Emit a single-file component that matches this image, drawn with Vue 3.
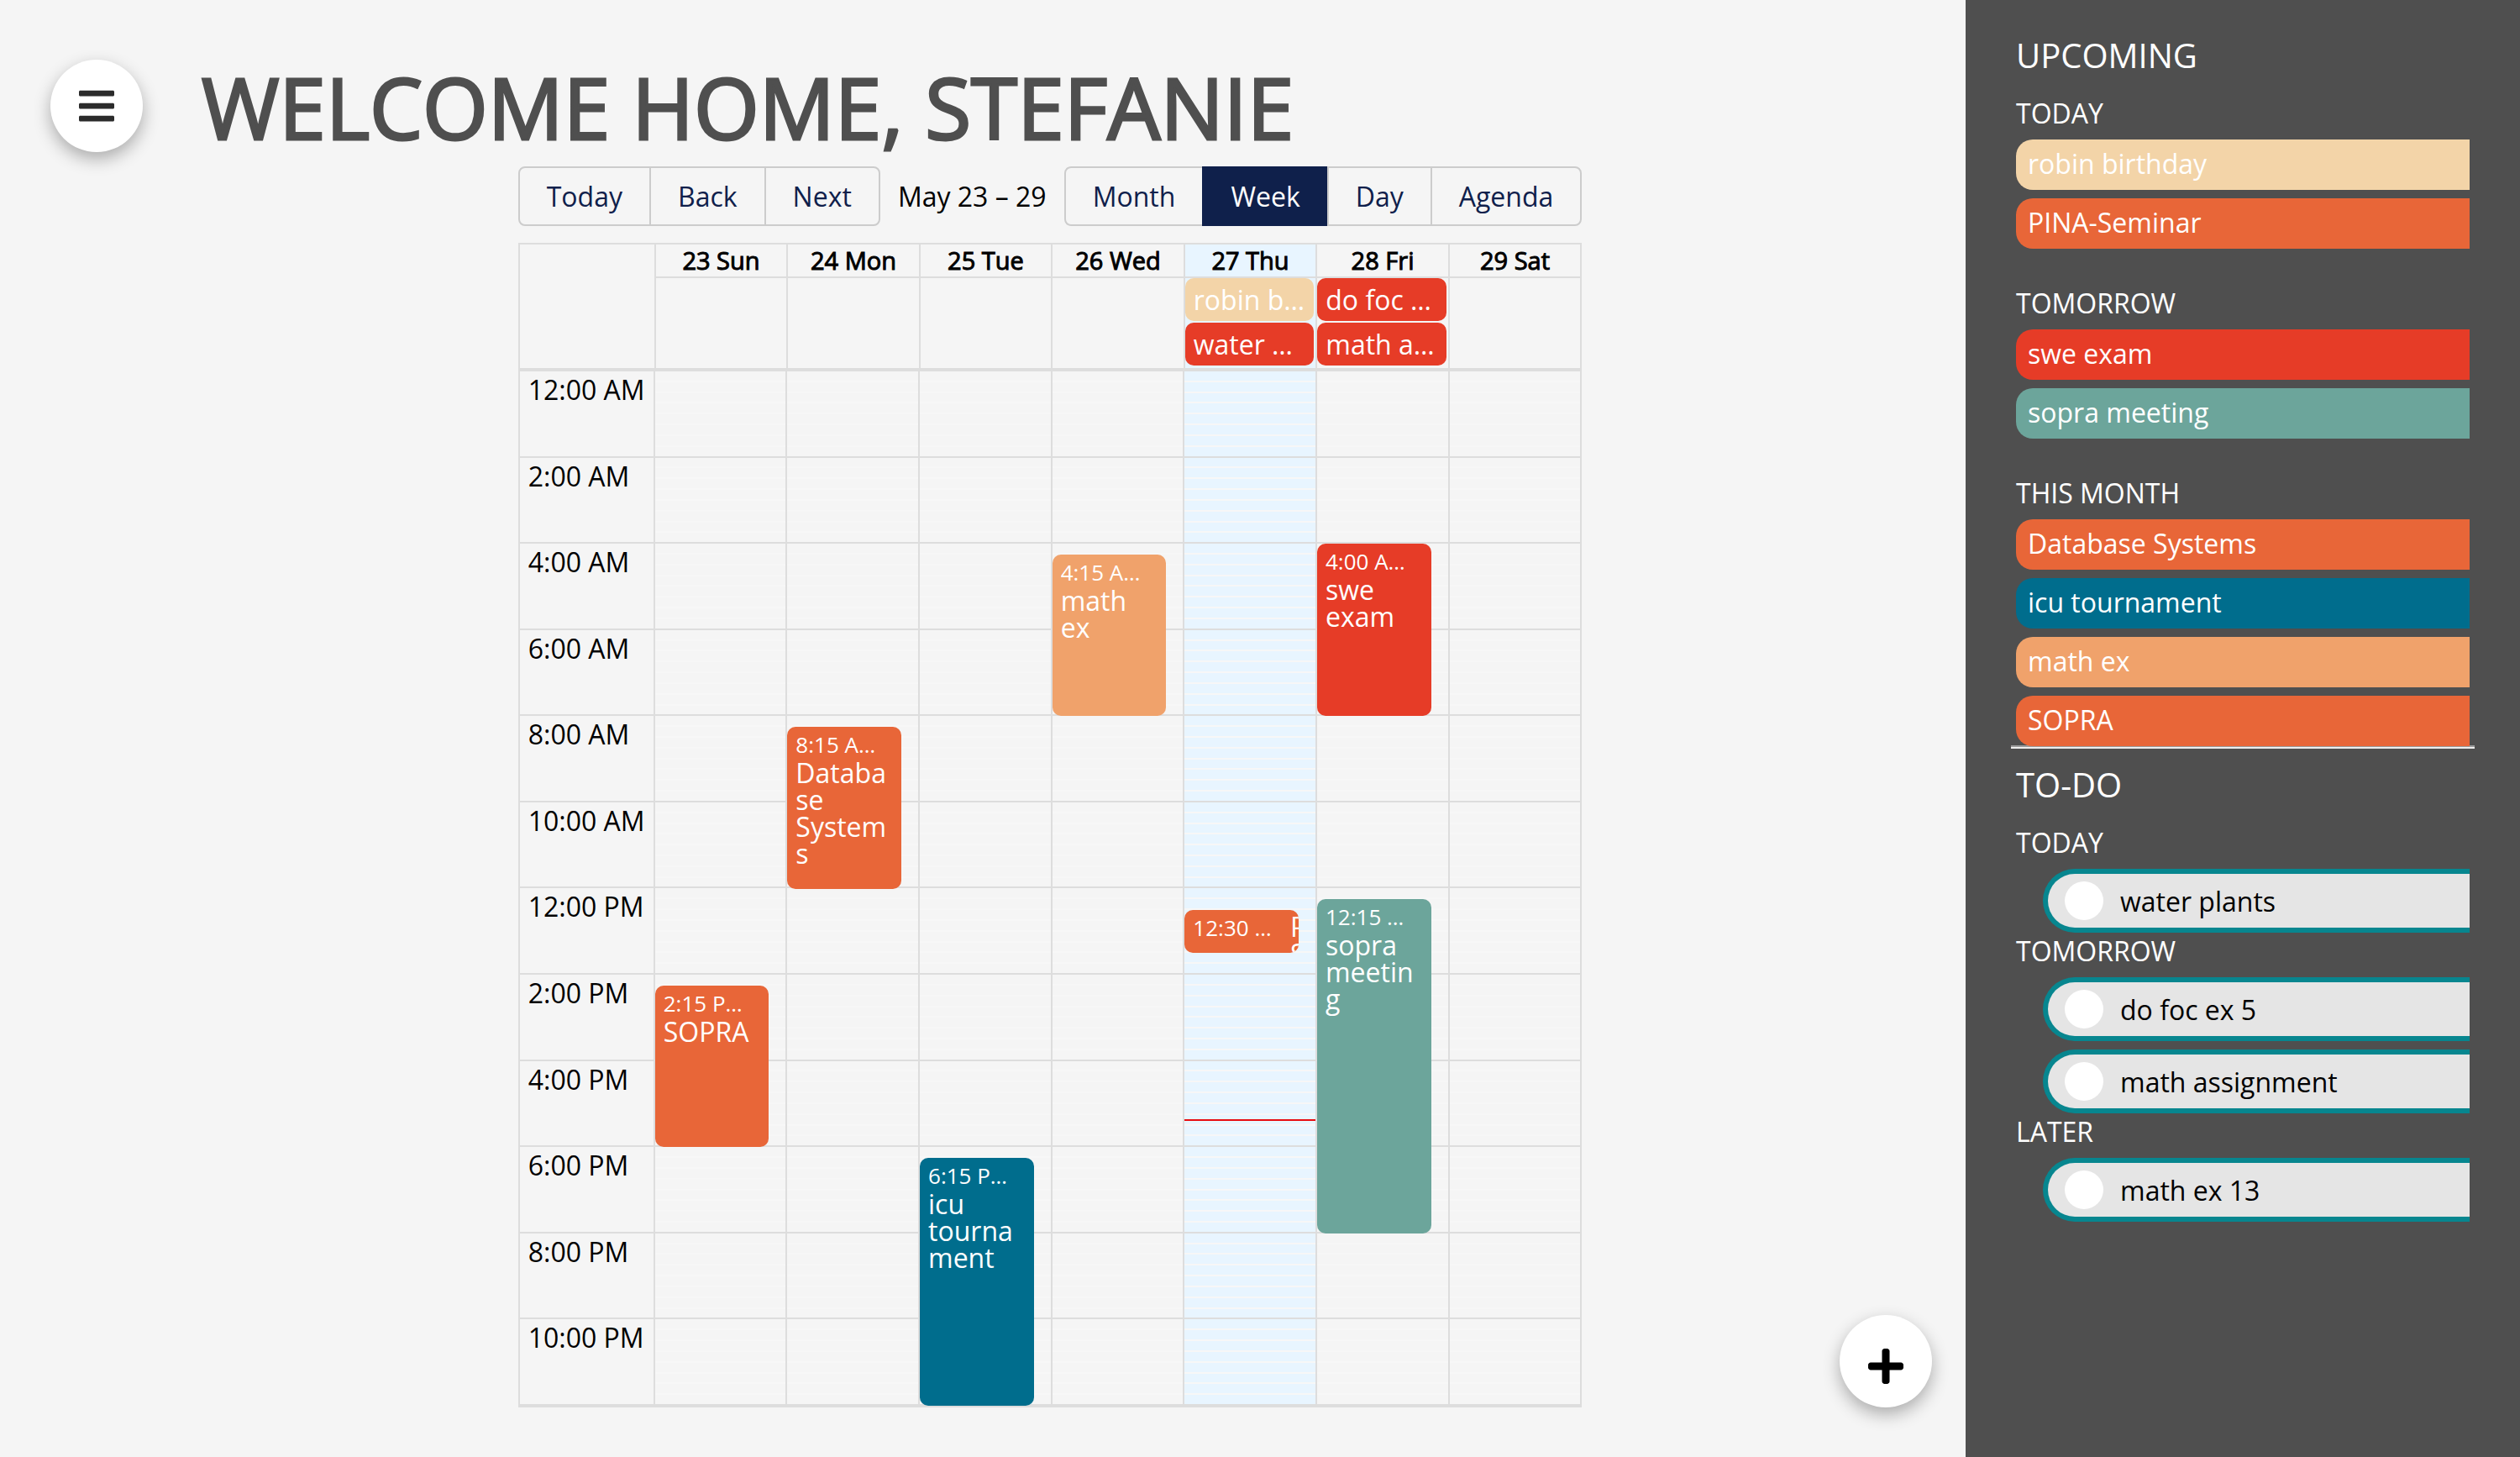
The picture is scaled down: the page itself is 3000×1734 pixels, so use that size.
<script setup>
import { ref } from 'vue'

const views = ['Month', 'Week', 'Day', 'Agenda']
const view = ref('Week')

const hours = [
  '12:00 AM', '2:00 AM', '4:00 AM', '6:00 AM', '8:00 AM', '10:00 AM',
  '12:00 PM', '2:00 PM', '4:00 PM', '6:00 PM', '8:00 PM', '10:00 PM',
]

// Event times are hours since midnight.
const days = [
  { name: '23 Sun', allDay: [], events: [{ title: 'SOPRA', label: '2:15 PM – 6:00 PM', from: 14.25, to: 18, tone: 'orange' }] },
  { name: '24 Mon', allDay: [], events: [{ title: 'Database Systems', label: '8:15 AM – 12:00 PM', from: 8.25, to: 12, tone: 'orange' }] },
  { name: '25 Tue', allDay: [], events: [{ title: 'icu tournament', label: '6:15 PM – 11:59 PM', from: 18.25, to: 24, tone: 'blue' }] },
  { name: '26 Wed', allDay: [], events: [{ title: 'math ex', label: '4:15 AM – 8:00 AM', from: 4.25, to: 8, tone: 'peach' }] },
  {
    name: '27 Thu',
    today: true,
    now: 17.35,
    allDay: [{ title: 'robin birthday', tone: 'sand' }, { title: 'water plants', tone: 'red' }],
    events: [{ title: 'PINA-Seminar', label: '12:30 PM – 1:30 PM', from: 12.5, to: 13.5, tone: 'orange' }],
  },
  {
    name: '28 Fri',
    allDay: [{ title: 'do foc ex 5', tone: 'red' }, { title: 'math assignment', tone: 'red' }],
    events: [
      { title: 'swe exam', label: '4:00 AM – 8:00 AM', from: 4, to: 8, tone: 'red' },
      { title: 'sopra meeting', label: '12:15 PM – 8:00 PM', from: 12.25, to: 20, tone: 'green' },
    ],
  },
  { name: '29 Sat', allDay: [], events: [] },
]

const upcoming = [
  { name: 'TODAY', items: [{ title: 'robin birthday', tone: 'sand' }, { title: 'PINA-Seminar', tone: 'orange' }] },
  { name: 'TOMORROW', items: [{ title: 'swe exam', tone: 'red' }, { title: 'sopra meeting', tone: 'green' }] },
  {
    name: 'THIS MONTH',
    items: [
      { title: 'Database Systems', tone: 'orange' },
      { title: 'icu tournament', tone: 'blue' },
      { title: 'math ex', tone: 'peach' },
      { title: 'SOPRA', tone: 'orange' },
    ],
  },
]

const todos = [
  { name: 'TODAY', items: ['water plants'] },
  { name: 'TOMORROW', items: ['do foc ex 5', 'math assignment'] },
  { name: 'LATER', items: ['math ex 13'] },
]

const percent = (h) => `${(h / 24) * 100}%`
const span = (e) => ({ top: percent(e.from), height: percent(e.to - e.from) })
</script>

<template>
  <div class="page">
    <main class="main">
      <header class="top">
        <button class="round" type="button" aria-label="Menu">
          <svg class="icon" viewBox="0 0 448 512" aria-hidden="true">
            <path fill="#2b2b2b" d="M16 132h416c8.837 0 16-7.163 16-16V76c0-8.837-7.163-16-16-16H16C7.163 60 0 67.163 0 76v40c0 8.837 7.163 16 16 16zm0 160h416c8.837 0 16-7.163 16-16v-40c0-8.837-7.163-16-16-16H16c-8.837 0-16 7.163-16 16v40c0 8.837 7.163 16 16 16zm0 160h416c8.837 0 16-7.163 16-16v-40c0-8.837-7.163-16-16-16H16c-8.837 0-16 7.163-16 16v40c0 8.837 7.163 16 16 16z" />
          </svg>
        </button>
        <h1 class="title">WELCOME HOME, STEFANIE</h1>
      </header>

      <section class="calendar">
        <div class="toolbar">
          <div class="group">
            <button type="button">Today</button>
            <button type="button">Back</button>
            <button type="button">Next</button>
          </div>
          <span class="range">May 23 – 29</span>
          <div class="group">
            <button v-for="v in views" :key="v" type="button" :class="{ active: v === view }" @click="view = v">{{ v }}</button>
          </div>
        </div>

        <div class="week">
          <div class="week-head">
            <div class="gutter"></div>
            <div v-for="d in days" :key="d.name" class="head-col" :class="{ today: d.today }">
              <div class="day-name">{{ d.name }}</div>
              <div class="all-day">
                <div v-for="e in d.allDay" :key="e.title" class="chip" :class="e.tone">{{ e.title }}</div>
              </div>
            </div>
          </div>
          <div class="week-body">
            <div class="gutter">
              <div v-for="h in hours" :key="h" class="slot-group hour">{{ h }}</div>
            </div>
            <div v-for="d in days" :key="d.name" class="day-col" :class="{ today: d.today }">
              <div v-for="h in hours" :key="h" class="slot-group">
                <div v-for="n in 8" :key="n" class="slot"></div>
              </div>
              <div class="events">
                <div v-for="e in d.events" :key="e.title" class="event" :class="e.tone" :style="span(e)">
                  <div class="event-label">{{ e.label }}</div>
                  <div class="event-title">{{ e.title }}</div>
                </div>
              </div>
              <div v-if="d.now" class="now" :style="{ top: percent(d.now) }"></div>
            </div>
          </div>
        </div>
      </section>

      <button class="round add" type="button" aria-label="Add">
        <svg class="icon" viewBox="0 0 448 512" aria-hidden="true">
          <path d="M416 208H272V64c0-17.670-14.330-32-32-32h-32c-17.670 0-32 14.330-32 32v144H32c-17.670 0-32 14.330-32 32v32c0 17.670 14.330 32 32 32h144v144c0 17.670 14.330 32 32 32h32c17.670 0 32-14.330 32-32V304h144c17.670 0 32-14.330 32-32v-32c0-17.670-14.330-32-32-32z" />
        </svg>
      </button>
    </main>

    <aside class="side">
      <section class="upcoming">
        <h2>UPCOMING</h2>
        <div v-for="g in upcoming" :key="g.name" class="bars">
          <h3>{{ g.name }}</h3>
          <ul>
            <li v-for="i in g.items" :key="i.title" class="bar" :class="i.tone">{{ i.title }}</li>
          </ul>
        </div>
      </section>
      <hr>
      <section>
        <h2>TO-DO</h2>
        <div v-for="g in todos" :key="g.name" class="todos">
          <h3>{{ g.name }}</h3>
          <ul>
            <li v-for="t in g.items" :key="t">
              <label class="todo"><input type="checkbox">{{ t }}</label>
            </li>
          </ul>
        </div>
      </section>
    </aside>
  </div>
</template>

<style>
body {
  background: #f5f5f5;
}
</style>

<style scoped>
.page {
  display: flex;
  min-height: 100vh;
  font-family: "Open Sans", "Noto Sans", sans-serif;
  font-size: 32px;
  line-height: 43px;
  color: #000;
}

.page *,
.page {
  box-sizing: border-box;
}

button {
  font: inherit;
  cursor: pointer;
}

h1,
h2,
h3,
ul {
  margin: 0;
  padding: 0;
  list-style: none;
  font-weight: 400;
}

.sand { background: #f3d4a8; }
.orange { background: #e86638; }
.red { background: #e63c27; }
.green { background: #6ca59b; }
.blue { background: #006d8d; }
.peach { background: #f0a26b; }

.main {
  position: relative;
  flex: 1;
  min-width: 0;
  display: flex;
  flex-direction: column;
  padding: 56px 0 59px;
}

.top {
  display: flex;
  gap: 70px;
  padding-left: 60px;
}

.top .round {
  margin-top: 15px;
}

.round {
  display: flex;
  align-items: center;
  justify-content: center;
  width: 110px;
  height: 110px;
  padding: 0;
  border: 0;
  border-radius: 50%;
  background: #fff;
  box-shadow: 0 8px 20px rgba(0, 0, 0, 0.3);
}

.add {
  position: absolute;
  right: 40px;
  bottom: 59px;
  padding-top: 12px;
}

.icon {
  width: 42px;
  height: 48px;
}

.title {
  font-size: 100px;
  line-height: 142px;
  color: #4f4f4f;
  -webkit-text-stroke: 3px #4f4f4f;
}

.calendar {
  flex: 1;
  display: flex;
  flex-direction: column;
  width: calc((100% - 160px) * 0.581);
  margin-left: calc(160px + (100% - 160px) * 0.2095);
}

.toolbar {
  display: flex;
  align-items: center;
  margin-bottom: 20px;
}

.range {
  flex: 1;
  text-align: center;
}

.group {
  display: flex;
}

.group button {
  padding: 12px 32px;
  border: 2px solid #ccc;
  background: none;
  color: #0f204b;
}

.group button + button {
  margin-left: -2px;
}

.group button:first-child {
  border-radius: 8px 0 0 8px;
}

.group button:last-child {
  border-radius: 0 8px 8px 0;
}

.group button.active {
  background: #0f204b;
  border-color: #0f204b;
  color: #fff;
}

.week {
  flex: 1;
  display: flex;
  flex-direction: column;
  border: 2px solid #ddd;
}

.week-head,
.week-body {
  display: flex;
}

.week-body {
  flex: 1;
  border-top: 4px solid #ddd;
}

.gutter {
  flex: none;
  display: flex;
  flex-direction: column;
  width: 160px;
}

.week-body .gutter {
  width: 159px;
}

.head-col,
.day-col {
  flex: 1;
  min-width: 0;
  border-left: 2px solid #ddd;
}

.today {
  background: #e8f5ff;
}

.day-name {
  border-bottom: 2px solid #ddd;
  font-size: 29px;
  line-height: 38px;
  text-align: center;
  -webkit-text-stroke: 1px #000;
}

.all-day {
  display: flex;
  flex-direction: column;
  gap: 2px;
  height: 107px;
  padding-right: 2px;
}

.chip {
  padding: 4px 10px;
  border-radius: 10px;
  color: #fff;
  white-space: nowrap;
  overflow: hidden;
  text-overflow: ellipsis;
}

.day-col {
  position: relative;
  display: flex;
  flex-direction: column;
}

.slot-group {
  flex: 1 1 0;
  display: flex;
  flex-direction: column;
  min-height: 80px;
  border-bottom: 2px solid #ddd;
}

.hour {
  padding: 0 10px;
}

.slot {
  flex: 1;
}

.slot + .slot {
  border-top: 2px solid #f7f7f7;
}

.events {
  position: absolute;
  inset: 0 20px 0 0;
}

.event {
  position: absolute;
  left: 0;
  width: 100%;
  display: flex;
  flex-flow: column wrap;
  align-items: flex-start;
  padding: 4px 10px;
  border-radius: 10px;
  color: #fff;
  overflow: hidden;
}

.event-label {
  flex: none;
  max-width: 100%;
  padding-right: 10px;
  font-size: 26px;
  line-height: 35px;
  white-space: nowrap;
  overflow: hidden;
  text-overflow: ellipsis;
}

.event-title {
  flex: 1 1 0;
  width: 100%;
  min-height: 32px;
  line-height: 32px;
  overflow-wrap: break-word;
}

.now {
  position: absolute;
  left: 0;
  right: 0;
  height: 2px;
  background: #e80c10;
}

.side {
  width: 22%;
  padding: 39px 60px;
  background: #4f4f4f;
  color: #fff;
}

h2 {
  font-size: 40px;
  line-height: 54px;
  margin-bottom: 20px;
}

h3 {
  font-size: 32px;
  line-height: 43px;
  margin-bottom: 10px;
}

.side ul {
  display: flex;
  flex-direction: column;
  gap: 10px;
}

.upcoming {
  position: relative;
}

.bars + .bars {
  margin-top: 43px;
}

.bar {
  padding: 7px 14px 10px;
  border-radius: 20px 0 0 20px;
}

hr {
  height: 4px;
  margin: -1px -6px 16px;
  border: 0;
  border-top: 2px solid #9a9a9a;
  border-bottom: 2px solid #eee;
}

.todo {
  display: flex;
  align-items: center;
  gap: 20px;
  height: 76px;
  margin-left: 32px;
  padding-left: 20px;
  border: 6px solid #07868f;
  border-right: 0;
  border-radius: 38px 0 0 38px;
  background: #e5e5e5;
  color: #000;
}

.todo input {
  appearance: none;
  width: 46px;
  height: 46px;
  margin: 0;
  border-radius: 50%;
  background: #fff;
}
</style>
